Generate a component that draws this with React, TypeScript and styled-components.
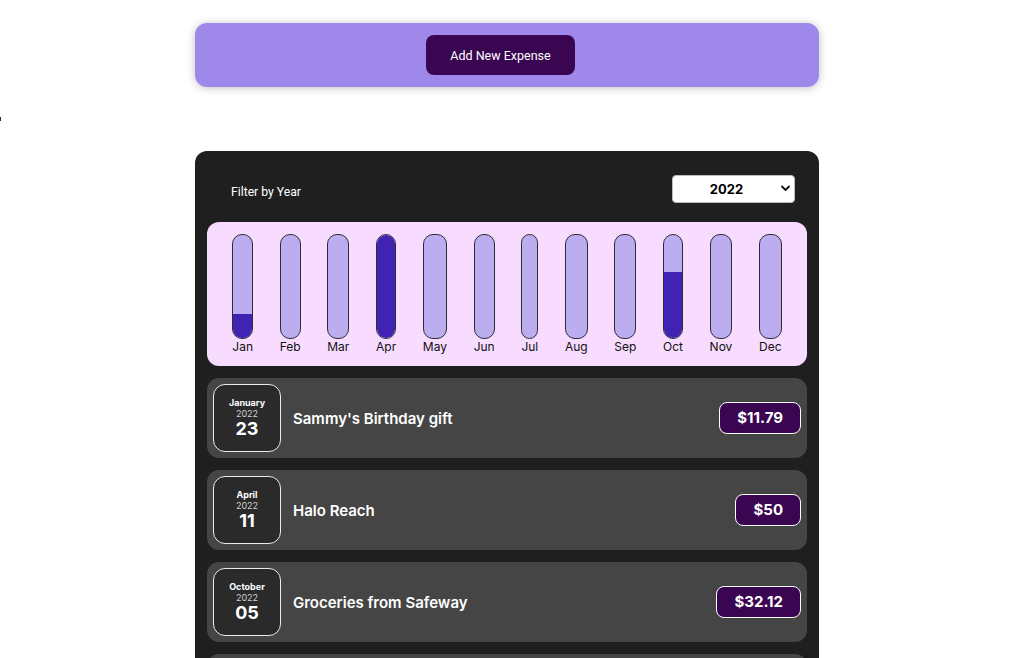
import React from "react";
import styled, { createGlobalStyle } from "styled-components";

const GlobalStyle = createGlobalStyle`
  html, body { margin: 0; padding: 0; background: #ffffff; }
  body { font-family: Inter, "Noto Sans", sans-serif; }
  * { box-sizing: border-box; }
`;

const Page = styled.div`
  padding: 23px 0 40px 4px;
`;

const Column = styled.div`
  width: 624px;
  margin: 0 auto;
`;

const NewExpenseCard = styled.div`
  background: #9e89eb;
  border-radius: 12px;
  padding: 12px;
  display: flex;
  justify-content: center;
  box-shadow: 0 1px 8px rgba(0, 0, 0, 0.25);
`;

const AddButton = styled.button`
  font-family: Roboto, Inter, sans-serif;
  font-size: 12.5px;
  color: #ffffff;
  background: #3a0652;
  border: none;
  border-radius: 8px;
  width: 149px;
  height: 40px;
  margin-right: 13px;
  cursor: pointer;
`;

const Gap = styled.div`
  height: 64px;
  margin-left: -4px;
  display: flex;
  align-items: flex-start;
`;

const Stray = styled.div`
  width: 1px;
  height: 4px;
  margin-top: 30px;
  background: #333;
`;

const ExpensesCard = styled.div`
  background: #1f1f1f;
  border-radius: 12px;
  padding: 12px;
`;

const FilterRow = styled.div`
  display: flex;
  justify-content: space-between;
  align-items: center;
  padding: 12px 12px 0 24px;
  margin-bottom: 19px;
`;

const FilterLabel = styled.label`
  font-family: Roboto, Inter, sans-serif;
  font-size: 12.2px;
  color: #ffffff;
  padding-top: 6px;
`;

const SelectWrap = styled.div`
  position: relative;
  width: 123px;
  height: 28px;
`;

const YearSelect = styled.select`
  appearance: none;
  -webkit-appearance: none;
  width: 100%;
  height: 100%;
  background: #ffffff;
  border: 1px solid #bdbdbd;
  border-radius: 4px;
  font-family: Inter, sans-serif;
  font-weight: 700;
  font-size: 13px;
  color: #000;
  text-align: center;
  text-align-last: center;
  padding: 0 14px 0 0;
`;

const Chevron = styled.svg`
  position: absolute;
  right: 5px;
  top: 10px;
  pointer-events: none;
`;

const Chart = styled.div`
  background: #f7dcff;
  border-radius: 12px;
  padding: 12px;
  height: 144px;
  display: flex;
  justify-content: space-around;
`;

const BarColumn = styled.div`
  display: flex;
  flex-direction: column;
  align-items: center;
  height: 100%;
`;

const BarTrack = styled.div`
  flex: 1;
  width: 100%;
  border: 1px solid #2e2e2e;
  border-radius: 10px;
  background: #bcadf1;
  display: flex;
  flex-direction: column;
  justify-content: flex-end;
  overflow: hidden;
`;

const BarFill = styled.div`
  width: 100%;
  background: #4023b2;
`;

const BarLabel = styled.div`
  font-family: Inter, sans-serif;
  font-size: 12px;
  line-height: 15px;
  color: #111;
  text-align: center;
`;

const List = styled.ul`
  list-style: none;
  margin: 12px 0 0;
  padding: 0;
  display: flex;
  flex-direction: column;
  gap: 12px;
`;

const Item = styled.li`
  background: #454545;
  border-radius: 12px;
  padding: 6px;
  height: 80px;
  display: flex;
  align-items: center;
  gap: 12px;
`;

const DateBox = styled.div`
  width: 68px;
  height: 68px;
  flex: none;
  border: 1px solid #ececec;
  border-radius: 12px;
  background: #2a2a2a;
  color: #ffffff;
  display: flex;
  flex-direction: column;
  align-items: center;
  justify-content: center;
`;

const DateMonth = styled.div`
  font-size: 9px;
  font-weight: 700;
  line-height: 10px;
`;

const DateYear = styled.div`
  font-size: 9px;
  line-height: 11px;
  color: #d0d0d0;
`;

const DateDay = styled.div`
  font-size: 18px;
  font-weight: 700;
  line-height: 20px;
`;

const Title = styled.h2`
  flex: 1;
  margin: 0;
  font-size: 15px;
  font-weight: 600;
  color: #ffffff;
`;

const Price = styled.div`
  font-size: 15px;
  font-weight: 700;
  line-height: 18px;
  color: #ffffff;
  background: #3a0652;
  border: 1px solid #ffffff;
  border-radius: 8px;
  padding: 6px 17px;
`;

type Expense = { title: string; amount: number; month: string; day: string };

const expenses: Expense[] = [
  { title: "Sammy's Birthday gift", amount: 11.79, month: "January", day: "23" },
  { title: "Halo Reach", amount: 50, month: "April", day: "11" },
  { title: "Groceries from Safeway", amount: 32.12, month: "October", day: "05" },
  { title: "Movie Tickets", amount: 18.5, month: "April", day: "02" },
];

const months = ["Jan", "Feb", "Mar", "Apr", "May", "Jun", "Jul", "Aug", "Sep", "Oct", "Nov", "Dec"];
const chartValues = [11.79, 0, 0, 50, 0, 0, 0, 0, 0, 32.12, 0, 0];

export default function App() {
  const max = Math.max(...chartValues);
  return (
    <>
      <GlobalStyle />
      <Page>
        <Column>
          <NewExpenseCard>
            <AddButton>Add New Expense</AddButton>
          </NewExpenseCard>
        </Column>
        <Gap>
          <Stray />
        </Gap>
        <Column>
          <ExpensesCard>
            <FilterRow>
              <FilterLabel>Filter by Year</FilterLabel>
              <SelectWrap>
                <YearSelect defaultValue="2022">
                  <option value="2022">2022</option>
                  <option value="2021">2021</option>
                  <option value="2020">2020</option>
                  <option value="2019">2019</option>
                </YearSelect>
                <Chevron width="9" height="7" viewBox="0 0 9 7">
                  <path d="M1 1.5 L4.5 5 L8 1.5" fill="none" stroke="#111" strokeWidth="1.8" strokeLinecap="round" strokeLinejoin="round" />
                </Chevron>
              </SelectWrap>
            </FilterRow>
            <Chart>
              {months.map((m, i) => (
                <BarColumn key={m}>
                  <BarTrack>
                    <BarFill style={{ height: `${(chartValues[i] / max) * 100}%` }} />
                  </BarTrack>
                  <BarLabel>{m}</BarLabel>
                </BarColumn>
              ))}
            </Chart>
            <List>
              {expenses.map((e) => (
                <Item key={e.title}>
                  <DateBox>
                    <DateMonth>{e.month}</DateMonth>
                    <DateYear>2022</DateYear>
                    <DateDay>{e.day}</DateDay>
                  </DateBox>
                  <Title>{e.title}</Title>
                  <Price>${e.amount}</Price>
                </Item>
              ))}
            </List>
          </ExpensesCard>
        </Column>
      </Page>
    </>
  );
}
